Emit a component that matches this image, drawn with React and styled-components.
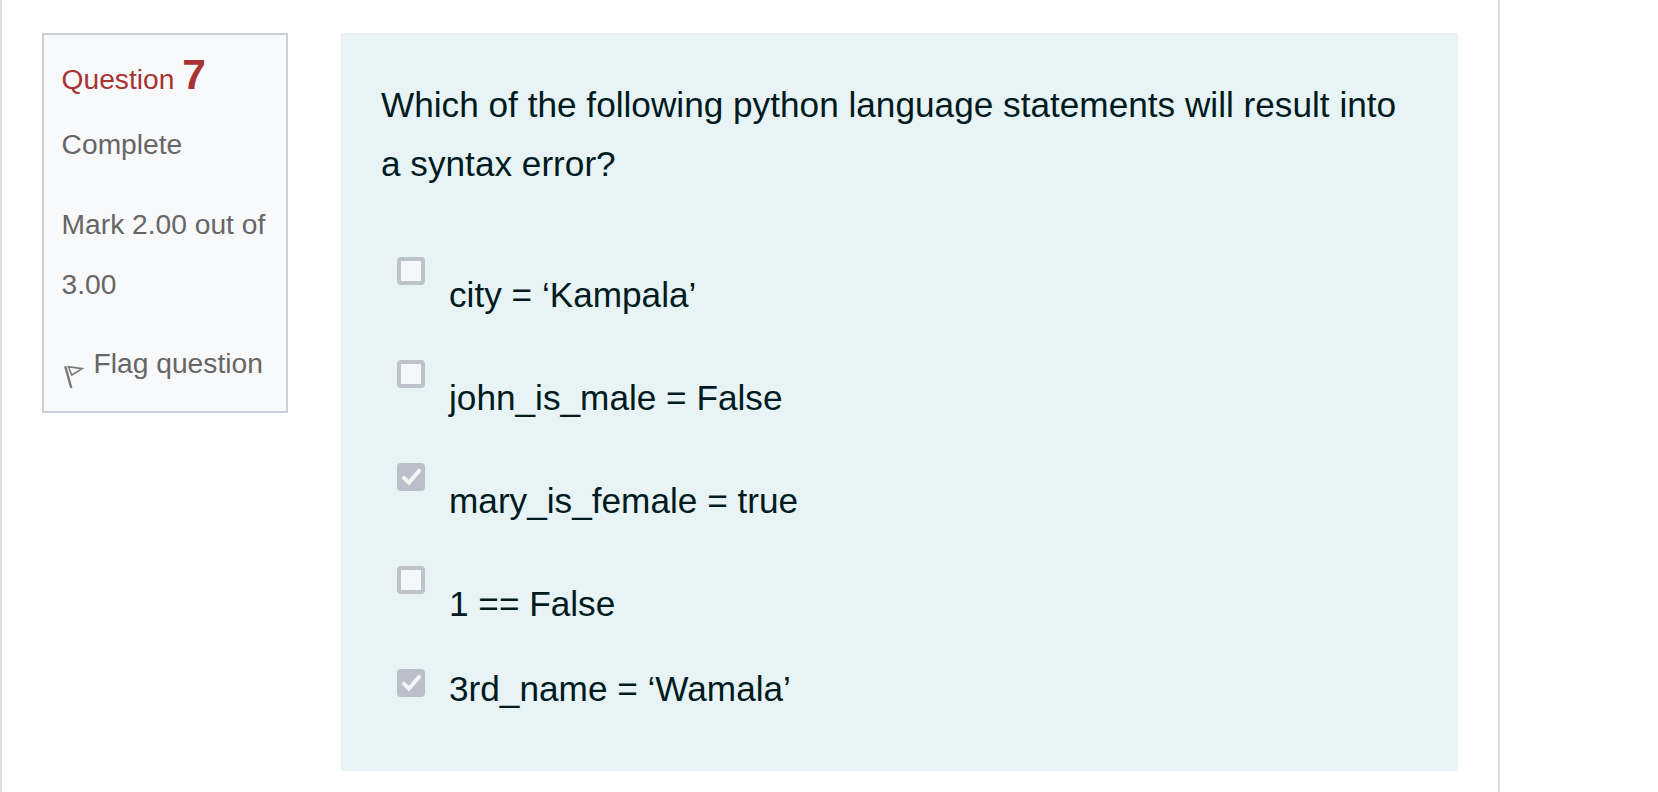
import React from "react";
import styled, { createGlobalStyle } from "styled-components";

const GlobalStyle = createGlobalStyle`
  * { box-sizing: border-box; }
  body {
    margin: 0;
    background: #fff;
    font-family: "Liberation Sans", Arial, Helvetica, sans-serif;
  }
`;

const Page = styled.main`
  display: flex;
  align-items: flex-start;
  width: 1500px;
  height: 792px;
  padding: 33px 40px 0;
  border: solid #dedede;
  border-width: 0 2px;
`;

const Info = styled.aside`
  width: 246px;
  height: 380px;
  margin-right: 53px;
  padding: 14px 0 0 17.6px;
  border: 2px solid #cad0d7;
  background: #f8f9fb;
  color: #666;
  font-size: 28.2px;
  line-height: 60px;
  white-space: nowrap;
`;

const Heading = styled.h3`
  height: 65px;
  margin: 0;
  color: #a93232;
  font-size: inherit;
  font-weight: 400;
`;

const Number = styled.span`
  font-size: 42.5px;
  font-weight: 700;
  line-height: 0;
`;

const State = styled.div`
  height: 80px;
`;

const Grade = styled.div`
  width: 212px;
  height: 139px;
  white-space: normal;
`;

const FlagButton = styled.div`
  display: flex;
  align-items: center;
  gap: 9px;

  svg {
    margin-top: 28px;
  }
`;

const Content = styled.section`
  width: 1117px;
  height: 738px;
  padding: 42px 40px 0;
  background: #e7f3f5;
  color: #001a1e;
  font-size: 35.2px;
  line-height: 59px;
`;

const Prompt = styled.p`
  margin: 0;
  height: 172px;
`;

const Answers = styled.div`
  padding-left: 16px;
`;

const Answer = styled.div`
  display: flex;
  align-items: flex-start;
  gap: 24px;
  height: 103px;
`;

const Checkbox = styled.span`
  display: flex;
  flex: none;
  width: 28px;
  height: 28px;
  margin-top: 10px;
  border: 4px solid ${(p) => (p.$checked ? "#b9c0c9" : "#bec2ca")};
  border-radius: 4px;
  background: ${(p) => (p.$checked ? "#b9c0c9" : "#f4f8fc")};

  svg {
    flex: none;
    margin: -4px;
  }
`;

const AnswerText = styled.span`
  padding-top: ${(p) => (p.$compact ? 0 : 18)}px;
`;

const answers = [
  { text: "city = ‘Kampala’" },
  { text: "john_is_male = False" },
  { text: "mary_is_female = true", checked: true },
  { text: "1 == False" },
  { text: "3rd_name = ‘Wamala’", checked: true, compact: true },
];

const FlagIcon = () => (
  <svg width="23" height="24" viewBox="0 0 23 24" fill="none" stroke="#777">
    <path d="M3.2 1.2 9.3 23" strokeWidth="2.4" />
    <path d="M6.3 1.7 20.2 3.6 9.8 10Z" strokeWidth="1.6" />
  </svg>
);

const CheckIcon = () => (
  <svg width="28" height="28" viewBox="0 0 28 28" fill="none">
    <path d="M6.9 14.9 11.9 19.6 22.1 7.9" stroke="#f4f5f7" strokeWidth="3.9" strokeLinecap="round" />
  </svg>
);

export default function App() {
  return (
    <>
      <GlobalStyle />
      <Page>
        <Info>
          <Heading>
            Question <Number>7</Number>
          </Heading>
          <State>Complete</State>
          <Grade>Mark 2.00 out of 3.00</Grade>
          <FlagButton>
            <FlagIcon />
            Flag question
          </FlagButton>
        </Info>
        <Content>
          <Prompt>Which of the following python language statements will result into a syntax error?</Prompt>
          <Answers>
            {answers.map(({ text, checked, compact }) => (
              <Answer key={text}>
                <Checkbox role="checkbox" aria-checked={!!checked} aria-disabled="true" $checked={checked}>
                  {checked && <CheckIcon />}
                </Checkbox>
                <AnswerText $compact={compact}>{text}</AnswerText>
              </Answer>
            ))}
          </Answers>
        </Content>
      </Page>
    </>
  );
}
